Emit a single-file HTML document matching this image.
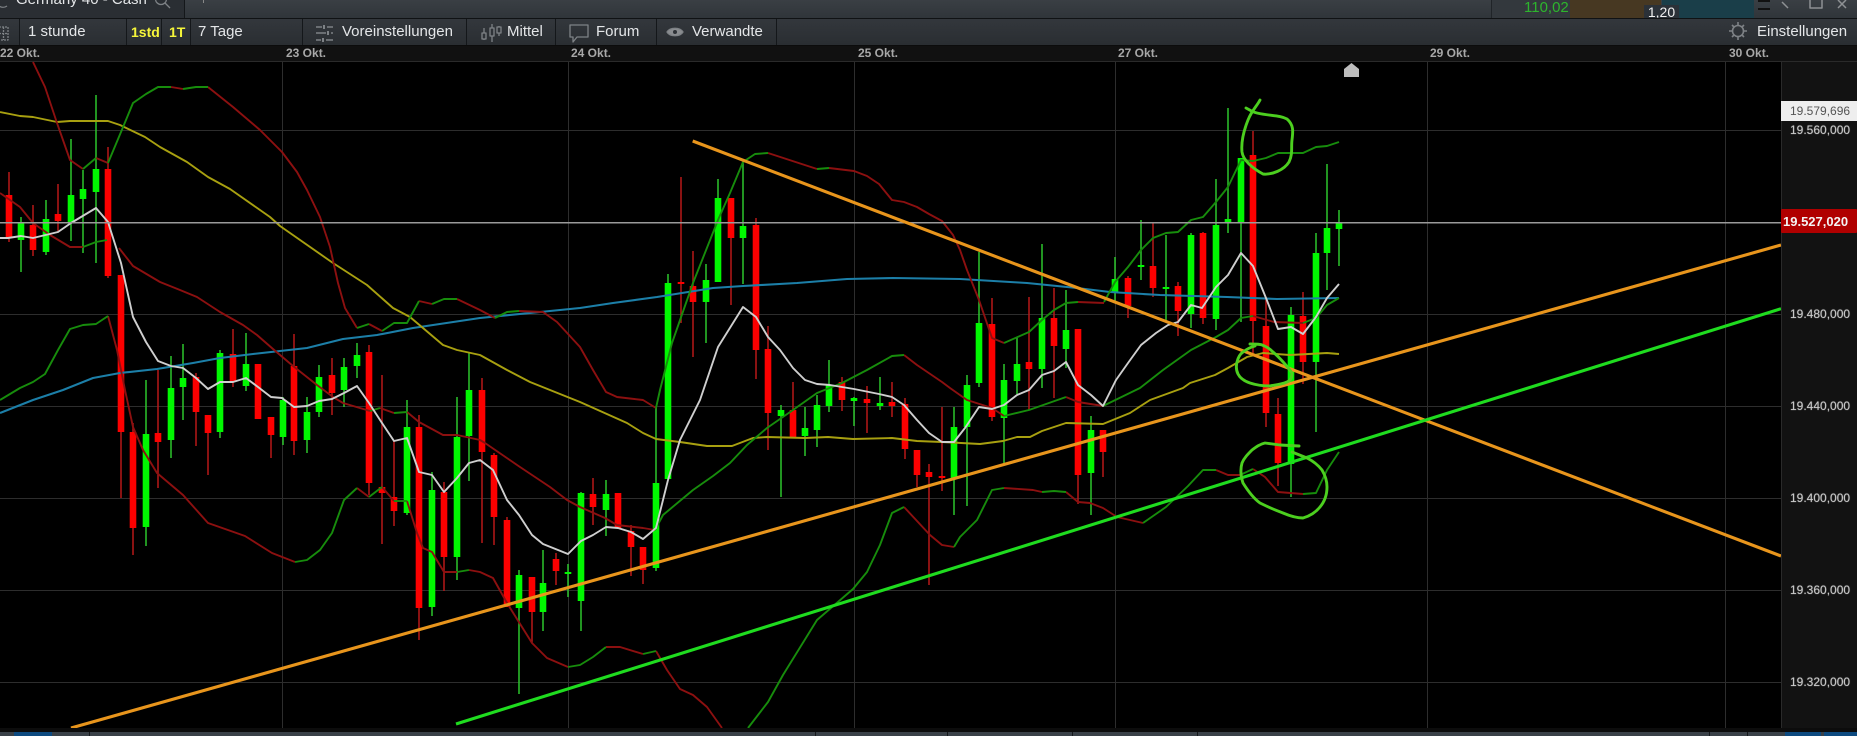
<!DOCTYPE html>
<html><head><meta charset="utf-8"><title>Chart</title>
<style>
html,body{margin:0;padding:0;background:#000;}
#p{position:relative;width:1857px;height:736px;overflow:hidden;background:#000;font-family:"Liberation Sans",sans-serif;color:#e8e8e8;}
#p div{position:absolute;}
.t{font-size:15px;line-height:18px;top:23px;white-space:nowrap;color:#e4e6e8;}
.s{top:19px;width:1px;height:26px;background:#14171a;}
.d{top:46px;font-size:12px;line-height:15px;font-weight:bold;color:#a8a8a8;white-space:nowrap;}
.a{left:1790px;font-size:12px;line-height:14px;color:#c8c8c8;white-space:nowrap;text-shadow:0 0 1px #999;}
.b{top:732px;height:4px;background:#3a4148;}
svg{position:absolute;left:0;top:0;}
#chart{filter:blur(.35px);}
</style></head><body><div id="p">
<div style="left:0;top:0;width:1857px;height:18px;background:linear-gradient(#3a3f44,#30353a);"></div>
<div style="left:0;top:0;width:184px;height:18px;background:#2a2e33;"></div>
<div style="left:16px;top:-9px;font-size:15px;line-height:18px;color:#e4e6e8;white-space:nowrap;">Germany 40 - Cash</div>
<div style="left:184px;top:0;width:1px;height:18px;background:#14171a;"></div>
<div style="left:203px;top:0;width:1px;height:3px;background:#888;"></div>
<div style="left:1491px;top:0;width:1px;height:18px;background:#202428;"></div>
<div style="left:1492px;top:0;width:78px;height:18px;background:#33383d;"></div>
<div style="left:1524px;top:-1px;font-size:15px;line-height:17px;color:#2db52d;">110,02</div>
<div style="left:1570px;top:0;width:91px;height:18px;background:#473822;"></div>
<div style="left:1662px;top:0;width:92px;height:18px;background:#1a3e49;"></div>
<div style="left:1644px;top:5px;width:35px;height:13px;background:#2b3138;font-size:14px;line-height:14px;text-align:center;color:#f0f0f0;">1,20</div>
<div style="left:1758px;top:0;width:12px;height:2px;background:#111;"></div>
<div style="left:1758px;top:8px;width:12px;height:2px;background:#111;"></div>
<div style="left:0;top:18px;width:1857px;height:1px;background:#101214;"></div>
<div style="left:0;top:19px;width:1857px;height:26px;background:linear-gradient(#33373c,#2a2e32);"></div>
<div style="left:0;top:45px;width:1857px;height:1px;background:#0c0c0c;"></div>
<div class="s" style="left:19px"></div><div class="s" style="left:126px"></div><div class="s" style="left:161px"></div><div class="s" style="left:190px"></div><div class="s" style="left:302px"></div><div class="s" style="left:466px"></div><div class="s" style="left:555px"></div><div class="s" style="left:656px"></div><div class="s" style="left:776px"></div>
<div class="t" style="left:28px">1 stunde</div>
<div class="t" style="left:131px;color:#f5f53a;font-weight:bold;font-size:14px;">1std</div>
<div class="t" style="left:169px;color:#f5f53a;font-weight:bold;font-size:14px;">1T</div>
<div class="t" style="left:198px">7 Tage</div>
<div class="t" style="left:342px">Voreinstellungen</div>
<div class="t" style="left:507px">Mittel</div>
<div class="t" style="left:596px">Forum</div>
<div class="t" style="left:692px">Verwandte</div>
<div class="t" style="left:1757px">Einstellungen</div>
<div style="left:0;top:46px;width:1857px;height:15px;background:#111;"></div>
<div style="left:0;top:61px;width:1857px;height:1px;background:#2a2a2a;"></div>
<div class="d" style="left:0">22 Okt.</div><div class="d" style="left:286px">23 Okt.</div><div class="d" style="left:571px">24 Okt.</div><div class="d" style="left:858px">25 Okt.</div><div class="d" style="left:1118px">27 Okt.</div><div class="d" style="left:1430px">29 Okt.</div><div class="d" style="left:1729px">30 Okt.</div>
<svg width="1857" height="736" viewBox="0 0 1857 736" fill="none" stroke-linejoin="round" stroke-linecap="butt">
<!-- toolbar icons -->
<g stroke="#7e8286" stroke-width="1.3">
<circle cx="161" cy="-1" r="5.5"/><path d="M165 3l5 5"/>
<path d="M-1 6a7 7 0 0 0 8 0"/>
<path d="M-1 27h9v13h-9zM-1 33.5h9M3.5 27v13" stroke-dasharray="2 1"/>
<path d="M316 27h6M327 27h6M316 33h10M331 33h2M316 40h5M326 40h7" stroke-width="1.4"/>
<path d="M324 25v4M328 31v4M323 38v4" stroke-width="2"/>
<path d="M484 28v12M492 24v18M499 26v10"/>
<path d="M482 33h4v6h-4zM490 28h4v8h-4zM497 27h4v6h-4z" fill="#2e3237"/>
<path d="M570 25h18v12h-11l-4 5v-5h-3z"/>
<path d="M667 32c3-5 13-5 16 0c-3 5-13 5-16 0z" fill="#8a8d90"/>
<circle cx="675" cy="32" r="2" fill="#2e3237" stroke="none"/>
<circle cx="1738" cy="31" r="5.5" stroke-width="1.6"/>
<path d="M1738 22v3M1738 37v3M1729 31h3M1744 31h3M1732 25l2 2M1742 35l2 2M1744 25l-2 2M1734 35l-2 2" stroke-width="1.6"/>
</g>
<g stroke="#c8cacc" stroke-width="1.5" opacity=".6"><path d="M1782 2l6 6M1810 0v8h12v-8M1838 0l8 8M1846 0l-8 8"/></g>
</svg>
<svg id="chart" width="1857" height="736" viewBox="0 0 1857 736" fill="none" stroke-linejoin="round" stroke-linecap="butt">
<!-- grid -->
<g stroke="#2d2d2d" stroke-width="1">
<path d="M0 130.5H1781M0 314.5H1781M0 406.5H1781M0 498.5H1781M0 590.5H1781M0 682.5H1781"/>
<path d="M282.5 62V728M568.5 62V728M854.5 62V728M1115.5 62V728M1427.5 62V728M1725.5 62V728"/>
</g>
<!-- wicks -->
<path stroke="#2cc52c" stroke-width="1.5" d="M21 217V272M46 200V255M71 139V241M83 170V253M96 95V263M146 380V546M171 356V458M183 344V420M220 350V438M246 333V391M283 397V445M307 397V453M319 365V417M344 358V407M357 343V378M407 400V515M432 472V616M457 397V580M469 352V481M519 570V694M543 550V631M568 564V597M581 492V631M606 480V536M656 407V571M668 274V479M706 264V343M718 179V282M743 162V284M781 405V497M805 407V456M817 395V447M829 360V412M854 397V426M880 377V410M954 407V515M967 375V506M979 252V387M1004 364V463M1017 338V394M1042 244V388M1066 290V368M1091 416V515M1115 257V302M1141 220V280M1166 235V320M1191 233V328M1216 179V330M1228 108V233M1241 158V322M1291 307V497M1316 233V432M1327 164V290M1339 210V266"/>
<path stroke="#b81818" stroke-width="1.5" d="M9 172V242M33 205V256M58 184V231M108 147V278M121 275V498M133 423V555M158 370V488M196 373V446M208 415V475M233 329V387M271 417V458M294 334V455M332 358V415M369 345V495M382 375V544M394 440V526M419 415V640M444 482V591M482 378V543M494 453V545M507 517V607M532 577V643M556 553V585M593 478V525M631 525V576M643 547V584M681 177V323M693 251V357M731 198V305M756 218V379M768 326V450M793 382V438M842 377V411M867 386V433M892 382V417M905 398V459M917 450V487M929 464V585M942 407V491M992 298V421M1029 297V410M1054 288V398M1078 329V504M1103 430V477M1128 276V318M1153 223V297M1178 282V336M1203 232V324M1253 131V353M1266 300V427M1278 398V486M1303 292V384"/>
<!-- bodies -->
<path stroke="#00f800" stroke-width="6.6" d="M21 223V240M46 219V252M71 195V223M83 189V199M96 169V192M146 434V527M171 388V440M183 378V387M220 353V432M246 364V386M283 400V437M307 412V440M319 377V412M344 367V390M357 355V366M407 427V513M432 490V607M457 437V557M469 390V436M519 575V608M543 583V612M568 572V574M581 493V601M606 494V510M656 483V568M668 283V479M706 280V302M718 198V282M743 226V238M781 410V416M805 428V436M817 405V430M829 385V406M854 398V401M880 403V406M954 427V478M967 385V427M979 323V383M1004 380V418M1017 364V381M1042 318V369M1066 330V349M1091 430V473M1115 279V292M1141 265V267M1166 287V289M1191 235V314M1216 225V319M1228 219V223M1241 158V223M1291 315V464M1316 253V362M1327 228V253M1339 223V229"/>
<path stroke="#fc0000" stroke-width="6.6" d="M9 195V238M33 225V250M58 214V221M108 169V276M121 275V432M133 432V528M158 433V442M196 377V412M208 415V433M233 354V382M258 364V419M271 417V435M294 366V441M332 375V393M369 352V483M382 487V493M394 497V511M419 427V608M444 492V557M482 390V452M494 455V517M507 520V607M532 577V612M556 559V571M593 494V507M618 493V528M631 531V547M643 547V570M681 282V284M693 286V302M731 198V238M756 225V350M768 349V413M793 410V438M842 382V400M867 399V403M892 402V406M905 404V449M917 450V475M929 472V477M942 476V478M992 324V417M1029 362V369M1054 318V346M1078 329V475M1103 430V452M1128 278V306M1153 266V288M1178 286V311M1203 233V318M1253 155V321M1266 326V413M1278 414V463M1303 316V362"/>
<!-- blue MA -->
<polyline stroke="#1c7fa8" stroke-width="2.1" points="0,413 33,400 63,390 93,378 120,373 157,369 193,363 220,358 253,354 307,348 343,339 377,335 413,328 480,318 540,312 580,308 613,303 657,297 713,288 743,286 797,283 847,279 893,278 960,279 1027,283 1077,288 1110,292 1160,295 1227,297 1277,299 1339,298"/>
<!-- yellow MA -->
<polyline stroke="#a8a010" stroke-width="1.9" points="0,112 20,116 33,117 57,122 70,121 108,121 120,125 145,137 160,147 187,162 208,177 230,189 270,217 280,226 333,263 367,285 393,308 410,317 443,345 457,350 480,355 507,370 530,382 580,402 627,423 643,433 656,439 680,442 707,446 732,446 753,438 767,437 805,438 828,437 853,439 892,438 917,441 942,442 980,444 1003,441 1017,437 1030,437 1042,431 1054,427 1066,423 1103,424 1130,413 1150,400 1183,388 1190,383 1215,375 1228,368 1247,357 1263,353 1290,355 1327,353 1339,354"/>
<!-- bands red -->
<g stroke="#8c1010" stroke-width="1.9">
<polyline points="33,62 45,87 57,123 70,160 83,169"/>
<polyline points="96,158 108,163"/>
<polyline points="171,87 183,89"/>
<polyline points="208,87 233,107 260,130 282,152 297,172 307,190 320,217 330,247 338,283 345,308 357,328"/>
<polyline points="369,324 382,331"/><polyline points="419,301 432,304"/>
<polyline points="457,299 480,310 495,318"/>
<polyline points="519,311 543,312 557,322 580,347 593,370 606,392 617,397 643,400 656,408"/>
<polyline points="768,153 817,169"/>
<polyline points="829,168 854,171 867,176 879,184 892,200 904,202 917,207 929,214 942,221 953,235 960,250 967,270 979,300 992,338 1004,343"/>
<polyline points="1078,302 1104,303"/>
<polyline points="0,193 20,207 33,223 50,235 70,247 83,247"/>
<polyline points="119,248 133,266 160,282 180,290 197,297 220,312 243,325 257,335 273,349 293,366 317,385 333,397 343,403 370,411"/>
<polyline points="380,408 394,413"/>
<polyline points="407,412 419,422 443,435 457,435 480,440 485,443 520,467 550,487 567,500 580,507 605,518 617,525 643,528 655,530"/>
<polyline points="904,355 917,365 942,382 950,388 967,400 992,408 1004,416"/>
<polyline points="1066,397 1078,402 1103,406"/>
<polyline points="1253,316 1274,322 1303,323"/>
<polyline points="108,316 117,350 125,390 133,427 143,450 157,473 183,495 208,523 245,536 272,553 295,562"/>
<polyline points="357,488 369,497"/><polyline points="382,487 394,501"/>
<polyline points="407,501 417,533 423,548 432,552 444,572 457,572"/>
<polyline points="469,570 480,572 493,578 507,603 532,643 547,658 568,667"/>
<polyline points="606,647 620,647 643,654"/>
<polyline points="656,651 667,670 680,689 693,695 707,707 722,728"/>
<polyline points="904,507 930,535 942,545 954,547"/>
<polyline points="1004,488 1033,490 1042,492"/>
<polyline points="1066,492 1078,502 1090,503 1103,508 1117,517 1143,523"/>
<polyline points="1216,470 1228,475 1240,475"/>
<polyline points="1253,469 1265,477 1278,492 1303,494"/>
</g>
<!-- bands green -->
<g stroke="#178c0c" stroke-width="1.9">
<polyline points="83,169 96,158"/>
<polyline points="108,163 121,132 133,103 146,94 158,87 171,87"/>
<polyline points="183,89 196,87 208,87"/>
<polyline points="357,328 369,324"/><polyline points="382,331 394,323 407,323 419,301"/>
<polyline points="432,304 444,299 457,299"/>
<polyline points="495,318 507,312 519,311"/>
<polyline points="656,408 660,390 672,343 693,283 718,220 730,193 743,162 755,154 768,153"/>
<polyline points="817,169 829,168"/>
<polyline points="1004,343 1029,332 1042,320 1054,310 1066,303 1078,302"/>
<polyline points="1104,302 1115,282 1128,267 1141,250 1153,238 1166,233 1178,232 1191,220 1203,217 1216,202 1228,187 1241,160 1253,161 1266,158 1278,153 1291,153 1303,153 1316,147 1327,146 1339,142"/>
<polyline points="83,247 96,242 107,240"/>
<polyline points="370,411 380,408"/><polyline points="394,413 407,412"/>
<polyline points="655,530 663,515 693,490 713,476 730,463 747,445 767,428 793,410 817,393 842,383 867,370 892,356 904,355"/>
<polyline points="1004,416 1029,410 1066,397"/>
<polyline points="1103,406 1140,388 1163,370 1191,350 1216,337 1228,330 1241,318 1253,316"/>
<polyline points="1303,323 1316,318 1327,305 1339,298"/>
<polyline points="0,400 20,388 33,382 45,374 58,350 70,329 83,325 96,324 108,316"/>
<polyline points="295,562 307,560 320,550 332,533 344,500 357,488"/>
<polyline points="369,497 382,487"/><polyline points="394,501 407,501"/>
<polyline points="457,572 469,570"/>
<polyline points="568,667 580,665 593,657 606,647"/>
<polyline points="643,654 656,651"/>
<polyline points="748,728 768,702 783,675 817,620 853,589 867,572 880,545 892,513 904,507"/>
<polyline points="954,547 960,537 977,520 992,490 1004,488"/>
<polyline points="1042,492 1054,491 1066,492"/>
<polyline points="1143,523 1166,507 1188,486 1203,470 1216,470"/>
<polyline points="1240,475 1253,469"/>
<polyline points="1303,494 1316,493 1327,470 1339,452"/>
</g>
<!-- white MA -->
<polyline stroke="#cfcfcf" stroke-width="1.9" points="0,238 8,238 21,236 33,238 58,232 71,223 96,208 108,222 121,263 133,317 146,342 158,361 171,366 183,368 196,378 208,389 220,382 233,382 246,378 258,387 271,397 282,398 294,407 307,406 319,401 332,399 344,393 357,386 369,403 382,423 394,441 407,438 419,472 432,475 444,492 457,478 469,463 480,460 493,470 507,500 519,515 532,535 543,544 568,554 581,541 593,535 606,527 618,528 631,532 643,539 656,528 668,480 680,440 700,400 718,347 743,307 756,317 768,337 780,350 793,368 805,380 817,384 830,385 854,389 879,394 892,397 904,405 917,420 929,433 942,442 954,442 965,428 979,407 992,409 1004,405 1017,395 1029,390 1042,375 1054,371 1066,362 1078,385 1091,395 1103,406 1116,380 1128,363 1141,345 1156,333 1168,325 1178,322 1191,305 1202,308 1216,287 1228,275 1241,253 1253,266 1266,298 1278,329 1291,327 1303,334 1316,317 1327,298 1339,284"/>
<!-- price line -->
<path stroke="#9a9a9a" stroke-width="1.5" d="M0 222.7H1781"/>
<!-- trend lines -->
<g stroke-width="3.1">
<path stroke="#e8951c" d="M692.7 141L1781 556"/>
<path stroke="#e8951c" d="M71 728L1781 245"/>
<path stroke="#1fdc1f" d="M456 724L1781 308.7"/>
</g>
<!-- hand-drawn -->
<g stroke="#4ccf1f" stroke-width="2.9" stroke-linecap="round">
<path d="M1260 100C1257 106 1252 110 1248 120C1244 130 1241 142 1242 152C1243 160 1252 168 1263 174C1272 175 1284 170 1289 162C1293 154 1291 147 1292 140C1293 132 1294 125 1287 119C1280 115 1270 116 1257 113C1252 112 1250 110 1246 108"/>
<path d="M1250 344C1256 344 1260 344 1262 345C1268 347 1272 351 1273 352C1279 357 1288 367 1292 373C1292 378 1290 381 1287 382C1280 385 1274 385 1270 386C1262 386 1256 385 1250 383C1244 381 1240 378 1238 374C1236 370 1236 366 1237 362C1238 358 1240 354 1243 352C1247 349 1251 347 1255 346"/>
<path d="M1299 446L1280 445L1265 443C1260 444 1256 447 1252 450C1248 454 1244 458 1242 463C1240 470 1241 477 1243 483C1248 491 1253 498 1260 503C1268 507 1275 510 1283 513C1290 516 1296 518 1303 518C1310 516 1316 512 1320 507C1325 501 1327 494 1327 487C1327 481 1325 475 1322 470C1318 465 1313 461 1307 458C1302 456 1297 454 1292 452"/>
</g>
<path d="M1344 77V69L1351.5 63L1359 69V77Z" fill="#bdbdbd"/>
</svg>
<div style="left:1781px;top:62px;width:76px;height:670px;background:#121212;border-left:1px solid #2a2a2a;box-sizing:border-box;"></div>
<div style="left:1781px;top:101px;width:76px;height:20px;background:#eeeeee;"></div>
<div class="a" style="top:104px;color:#555;text-shadow:none;">19.579,696</div>
<div class="a" style="top:123px;">19.560,000</div>
<div style="left:1781px;top:209px;width:76px;height:24px;background:#b00000;border-radius:1px;"></div>
<div style="left:1783px;top:214px;font-size:13px;line-height:15px;font-weight:bold;color:#f4f4f4;white-space:nowrap;">19.527,020</div>
<div class="a" style="top:307px;">19.480,000</div>
<div class="a" style="top:399px;">19.440,000</div>
<div class="a" style="top:491px;">19.400,000</div>
<div class="a" style="top:583px;">19.360,000</div>
<div class="a" style="top:675px;">19.320,000</div>
<div style="left:0;top:728px;width:1857px;height:4px;background:#0c0c0c;"></div>
<div class="b" style="left:0;width:1857px;"></div>
<div class="b" style="left:14px;width:38px;background:#0d4a80;"></div>
<div class="b" style="left:1785px;width:36px;background:#0d4a80;"></div>
<div class="b" style="left:1824px;width:33px;background:#0d4a80;"></div>
<div class="b" style="left:89px;width:1px;background:#15181b;"></div><div class="b" style="left:815px;width:1px;background:#15181b;"></div><div class="b" style="left:947px;width:1px;background:#15181b;"></div><div class="b" style="left:1072px;width:1px;background:#15181b;"></div><div class="b" style="left:1197px;width:1px;background:#15181b;"></div><div class="b" style="left:1709px;width:1px;background:#15181b;"></div><div class="b" style="left:1747px;width:1px;background:#15181b;"></div>
</div></body></html>
